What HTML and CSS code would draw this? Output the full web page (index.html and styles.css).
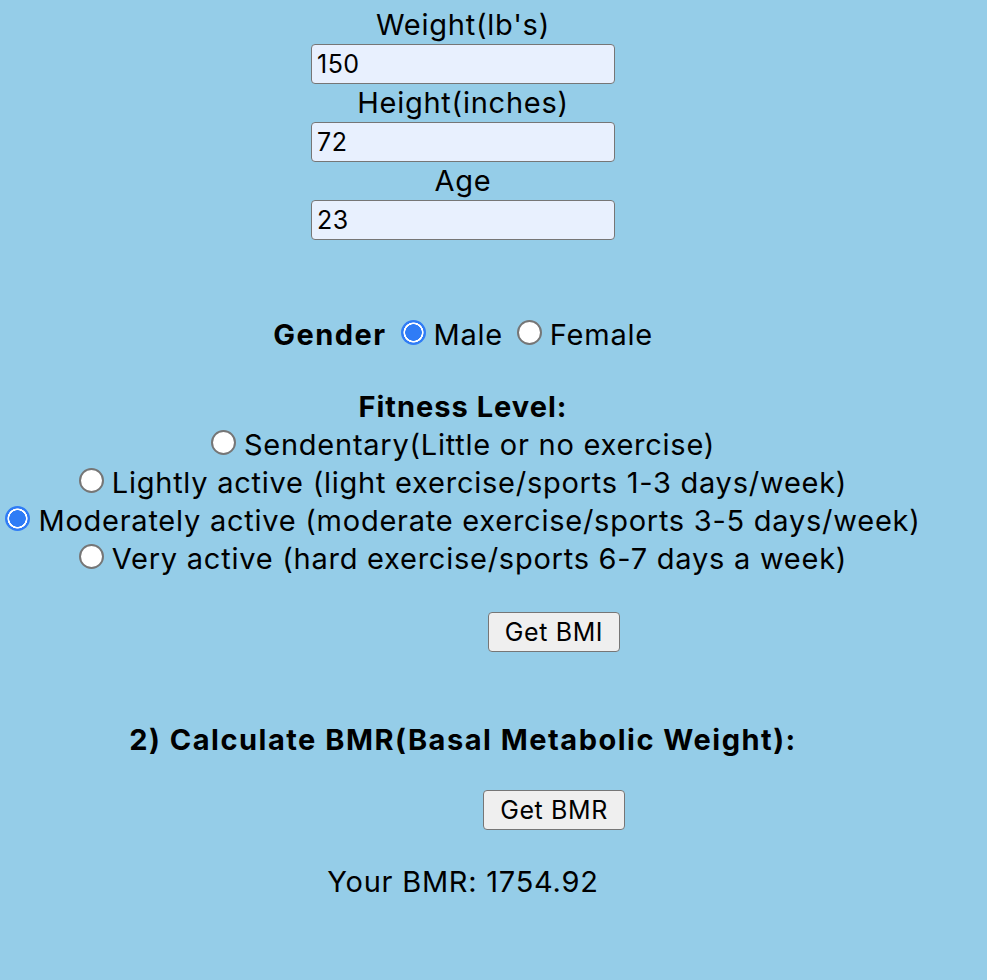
FILE: index.html
```html
<!DOCTYPE html>
<html>
<head>
<meta charset="utf-8">
<title>BMR Calculator</title>
<link rel="stylesheet" href="styles.css">
</head>
<body>
<main class="page">
  <div class="field-label">Weight(lb's)</div>
  <input class="num-input" type="text" value="150">
  <div class="field-label">Height(inches)</div>
  <input class="num-input" type="text" value="72">
  <div class="field-label">Age</div>
  <input class="num-input" type="text" value="23">

  <div class="gender-row"><b class="strong">Gender</b> <input class="radio" type="radio" name="g" checked>Male <input class="radio" type="radio" name="g">Female</div>

  <div class="fitness-title">Fitness Level:</div>
  <div class="opt"><input class="radio" type="radio" name="f">Sendentary(Little or no exercise)</div>
  <div class="opt"><input class="radio" type="radio" name="f">Lightly active (light exercise/sports 1-3 days/week)</div>
  <div class="opt"><input class="radio" type="radio" name="f" checked>Moderately active (moderate exercise/sports 3-5 days/week)</div>
  <div class="opt"><input class="radio" type="radio" name="f">Very active (hard exercise/sports 6-7 days a week)</div>

  <div class="btn-row btn-row-bmi"><button class="btn">Get BMI</button></div>

  <h2 class="bmr-title">2) Calculate BMR(Basal Metabolic Weight):</h2>

  <div class="btn-row btn-row-bmr"><button class="btn">Get BMR</button></div>

  <div class="result">Your BMR: 1754.92</div>
</main>
</body>
</html>
```
FILE: styles.css
```css
html, body {
  background: #95cde8;
}
body {
  margin: 6px 0 0 0;
  font-family: Inter, "Noto Sans", "Liberation Sans", sans-serif;
  font-size: 29px;
  line-height: 38px;
  letter-spacing: 0.75px;
  color: #000;
}
.page {
  width: 926px;
  text-align: center;
}
.field-label {
  height: 38px;
}
.num-input {
  display: block;
  box-sizing: border-box;
  width: 304px;
  height: 40px;
  margin: 0 auto;
  padding: 0 5px;
  border: 1px solid #767676;
  border-radius: 4px;
  background: #e8f0fe;
  font-family: inherit;
  font-size: 25px;
  letter-spacing: 0.5px;
  color: #000;
  outline: none;
}
.gender-row {
  margin-top: 76px;
}
.strong {
  font-weight: 700;
  letter-spacing: 1.5px;
}
.radio {
  appearance: none;
  -webkit-appearance: none;
  box-sizing: border-box;
  width: 25px;
  height: 25px;
  margin: 0 8px 0 5px;
  border: 2px solid #767676;
  border-radius: 50%;
  background: #fff;
  vertical-align: baseline;
}
.radio:checked {
  border: none;
  background: radial-gradient(circle, #2f7cf6 0 8px, #fff 8.5px 9.8px, #2f7cf6 10.3px);
}
.fitness-title {
  margin-top: 34px;
  font-weight: 700;
  letter-spacing: 1px;
}
.opt {
  white-space: nowrap;
  letter-spacing: 0.75px;
}
.opt .radio {
  margin-left: 0;
}
.btn-row {
  padding-left: 182px;
}
.btn-row-bmi {
  margin-top: 34px;
  height: 40px;
}
.btn {
  box-sizing: border-box;
  height: 40px;
  padding: 0 16px;
  border: 1px solid #767676;
  border-radius: 4px;
  background: #efefef;
  font-family: inherit;
  font-size: 25px;
  letter-spacing: 0.6px;
  color: #000;
  vertical-align: top;
}
.bmr-title {
  margin: 69px 0 0;
  font-size: 29px;
  line-height: 38px;
  font-weight: 700;
  letter-spacing: 1.5px;
}
.btn-row-bmr {
  margin-top: 31px;
  height: 40px;
}
.result {
  margin-top: 33px;
}
```
